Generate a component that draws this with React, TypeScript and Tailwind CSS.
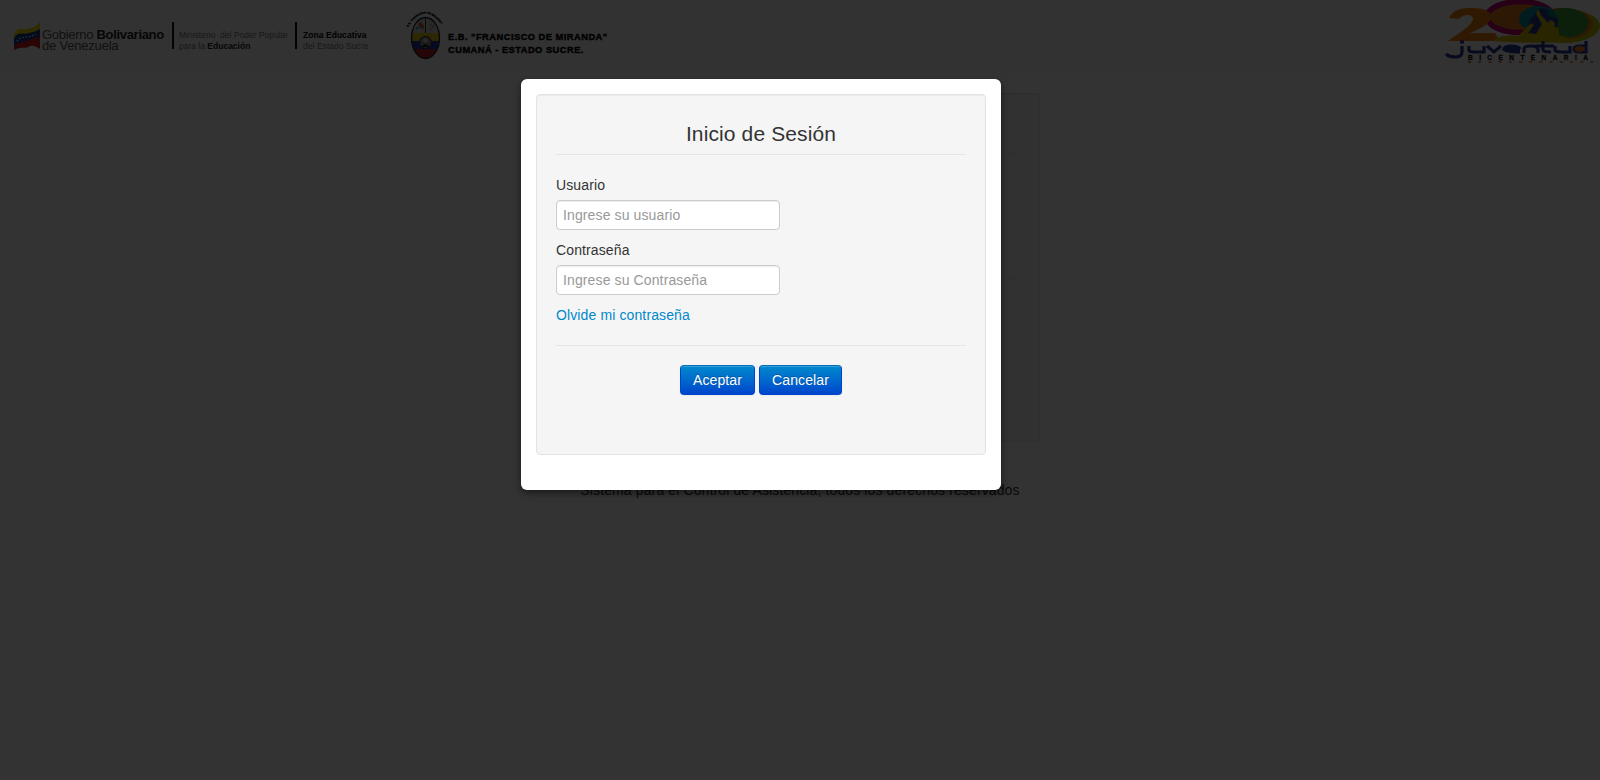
import React from "react";

function Flag() {
  return (
    <svg className="h-[30px] w-[26px]" viewBox="0 0 26 30">
      <path d="M0 12C5 3 9 9 14 7C19 6 22 4 26 0V20C20 19 17 20 12 22C7 24 4 26 0 27Z" fill="#f2d400" />
      <path d="M0 16C5 9 10 13 15 11C20 10 22 9 26 7V20C20 19 17 20 12 22C7 24 4 26 0 27Z" fill="#153a8a" />
      <path d="M0 25C5 18 10 21 15 18C20 16 22 16 26 15V27C20 23 18 23 14 25C10 27 8 24 0 28Z" fill="#d01a20" />
      <path d="M3 19C8 13 14 17 22 12" fill="none" stroke="#fff" strokeWidth="1.3" strokeDasharray="1.3 2" />
    </svg>
  );
}

function Crest() {
  return (
    <svg className="h-[50px] w-[38px] overflow-visible" viewBox="0 0 38 50">
      <defs>
        <clipPath id="shield"><ellipse cx="18.5" cy="26" rx="14" ry="20.5" /></clipPath>
        <path id="arc" d="M1 15Q18.5 -12 36 15" />
      </defs>
      <text fill="#111" stroke="#111" strokeWidth="0.3" fontFamily="Liberation Sans, sans-serif" fontSize="2.5" fontWeight="700">
        <textPath href="#arc">E.B. "FRANCISCO DE MIRANDA"</textPath>
      </text>
      <g clipPath="url(#shield)">
        <path d="M0 0H38V21H0Z" fill="#ccc" />
        <path d="M0 21H38V29H0Z" fill="#e0c010" />
        <path d="M0 29H38V37H0Z" fill="#2038b0" />
        <path d="M0 37H38V50H0Z" fill="#b82028" />
        <path d="M18.500 4V21" stroke="#333" />
        <path d="M11 12l3-2 3 4-1 4z" fill="#d85020" />
        <path d="M9 17l5-3" stroke="#20a0c0" strokeWidth="2" />
        <path d="M23 18l6-7M23 12l4 4" stroke="#888" />
        <circle cx="18.5" cy="30.5" r="6" fill="#888" stroke="#222" />
        <circle cx="18.5" cy="28.5" r="2.3" fill="#ccc" />
        <path d="M14.500 35q4-6 8 0z" fill="#222" />
      </g>
      <ellipse cx="18.5" cy="26" rx="14" ry="20.5" fill="none" stroke="#222" strokeWidth="1.3" />
    </svg>
  );
}

function YouthLogo() {
  return (
    <svg className="h-[66px] w-[160px]" viewBox="0 0 160 66">
      <ellipse cx="124" cy="26" rx="36" ry="17" fill="#b8c400" />
      <ellipse cx="122" cy="24" rx="31" ry="16" fill="#e87a18" />
      <ellipse cx="80" cy="17" rx="33" ry="15.5" fill="#e07a20" stroke="#c4007a" strokeWidth="5.5" />
      <path d="M9 18C13 9 23 7.5 33 8C45 8 53 12 51 19C47 26 38 30 30 33H55L60 41H8C17 34 34 25 33 18C32 14 23 14 19 19Z" fill="#f07c12" />
      <ellipse cx="99" cy="19" rx="20" ry="13" fill="#008b9c" />
      <ellipse cx="125" cy="23" rx="24" ry="15" fill="#3f9c3a" />
      <path d="M101 8Q114 9 118 19L117 32L92 35Q85 28 90 20Z" fill="#263a91" />
      <path d="M107 9Q116 9 118 19L109 16Z" fill="#0b7f86" />
      <path d="M52 41Q62 34 78 36L87 27L91 23L94 25L88 33L96 34L102 24L96 14L98 9L101 15L108 23Q109 19 113 21Q116 23 114 26L118 28L119 35Q128 37 134 42Q90 44 52 41Z" fill="#c8b800" />
      <g fill="none" stroke="#263a91" strokeWidth="3.2">
        <path d="M22 46V52Q22 57 15 57Q9 57 6 54M29 46V50Q29 52 35 52H44V46M47 46L54 52L61 46M80 49H64Q65 46 71 46Q79 46 80 49M64 49Q65 52 80 52M84 53V49Q84 46 91 46Q97 46 98 49V53M103 41V50Q103 52 111 52M95 46H114M115 46V50Q115 52 121 52H130V46M146 41V52H139Q134 52 134 49Q134 46 140 46H146" />
        <path d="M20 42H24" />
      </g>
      <ellipse cx="139.5" cy="49" rx="5" ry="3" fill="#f07c12" />
      <text x="28" y="59.5" textLength="120" fill="#111" stroke="#111" strokeWidth="0.3" fontFamily="Liberation Sans, sans-serif" fontSize="6.5" fontWeight="700">BICENTENARIA</text>
      <path d="M28 62H153" stroke="#d06a20" strokeWidth="1.5" strokeDasharray="3 7.2" />
    </svg>
  );
}

function Field({ label, placeholder, type }: { label: string; placeholder: string; type: string }) {
  return (
    <label className="mb-[10px] block">
      <span className="mb-[5px] block">{label}</span>
      <input type={type} placeholder={placeholder} className="block h-[30px] w-[224px] rounded-[4px] border border-[#ccc] bg-white px-[6px] py-1 tracking-[0.12px] shadow-[inset_0_1px_1px_rgba(0,0,0,0.075)] outline-none placeholder:text-[#999]" />
    </label>
  );
}

const button = "h-[30px] rounded-[4px] border border-[#0044cc] border-t-[#0070b8] bg-linear-to-b from-[#0088cc] to-[#0044cc] px-3 tracking-[0.12px] text-white shadow-[inset_0_1px_0_rgba(255,255,255,0.2),0_1px_2px_rgba(0,0,0,0.05)] [text-shadow:0_-1px_0_rgba(0,0,0,0.25)]";

export default function App() {
  return (
    <div className="relative h-[780px] overflow-hidden bg-white font-['Liberation_Sans',Arial,sans-serif] text-[14px] leading-5 tracking-[0.12px] text-[#333]">
      <header className="flex h-[73px] items-start justify-between bg-[#fafafa]">
        <div className="flex">
          <div className="flex w-[407px] pl-[14px] pt-[22px] tracking-normal">
            <Flag />
            <div className="w-[132px] pl-[2px] pt-[7px] text-[13px] leading-[11px] tracking-[-0.3px] whitespace-nowrap text-[#555]">
              Gobierno <b className="text-[#222]">Bolivariano</b><br /><span className="tracking-[-0.2px]">de Venezuela</span>
            </div>
            <div className="h-[27px] w-[2px] bg-[#111]" />
            <div className="w-[113px] pl-[5px] pt-[8px] text-[8.5px] leading-[11px] whitespace-nowrap text-[#777]">
              Ministerio&nbsp; del Poder Popular<br />para la <b className="text-[#222]">Educación</b>
            </div>
            <div className="ml-[8px] h-[27px] w-[2px] bg-[#111]" />
            <div className="pl-[6px] pt-[8px] text-[8.5px] leading-[11px] tracking-[0.05px] whitespace-nowrap text-[#777]">
              <b className="text-black">Zona Educativa</b><br />del Estado Sucre
            </div>
          </div>
          <div className="flex pt-[12px]">
            <Crest />
            <div className="pl-[3px] pt-[19px] text-[9.3px] leading-[12.5px] font-black tracking-[0.48px] whitespace-nowrap text-black [-webkit-text-stroke:0.4px_black]">
              E.B. "FRANCISCO DE MIRANDA"<br />CUMANÁ - ESTADO SUCRE.
            </div>
          </div>
        </div>
        <YouthLogo />
      </header>
      <main className="mx-auto mt-5 h-[349px] w-[480px] rounded-[4px] border border-[#e3e3e3] bg-[#f5f5f5] px-[19px] pt-[59px] shadow-[inset_0_1px_1px_rgba(0,0,0,0.05)]">
        <div className="h-[126px] border-y border-[#e5e5e5]" />
      </main>
      <footer className="mt-[38px] text-center">Sistema para el Control de Asistencia, todos los derechos reservados</footer>
      <div className="absolute inset-0 bg-black/80" />
      <section role="dialog" aria-label="Inicio de Sesión" className="absolute top-[79px] left-[521px] h-[411px] w-[480px] rounded-[6px] bg-white p-[15px] shadow-[0_3px_7px_rgba(0,0,0,0.5)]">
        <div className="h-[361px] rounded-[4px] border border-[#e3e3e3] bg-[#f5f5f5] p-[19px] shadow-[inset_0_1px_1px_rgba(0,0,0,0.05)]">
          <h1 className="mb-[20px] h-[41px] border-b border-[#e5e5e5] text-center text-[21px] leading-[40px]">Inicio de Sesión</h1>
          <Field label="Usuario" placeholder="Ingrese su usuario" type="text" />
          <Field label="Contraseña" placeholder="Ingrese su Contraseña" type="password" />
          <a href="#" className="block text-[#0088cc]">Olvide mi contraseña</a>
          <div className="mt-5 flex justify-center gap-1 border-t border-[#e5e5e5] pt-[19px]">
            <button className={button}>Aceptar</button>
            <button className={button}>Cancelar</button>
          </div>
        </div>
      </section>
    </div>
  );
}
